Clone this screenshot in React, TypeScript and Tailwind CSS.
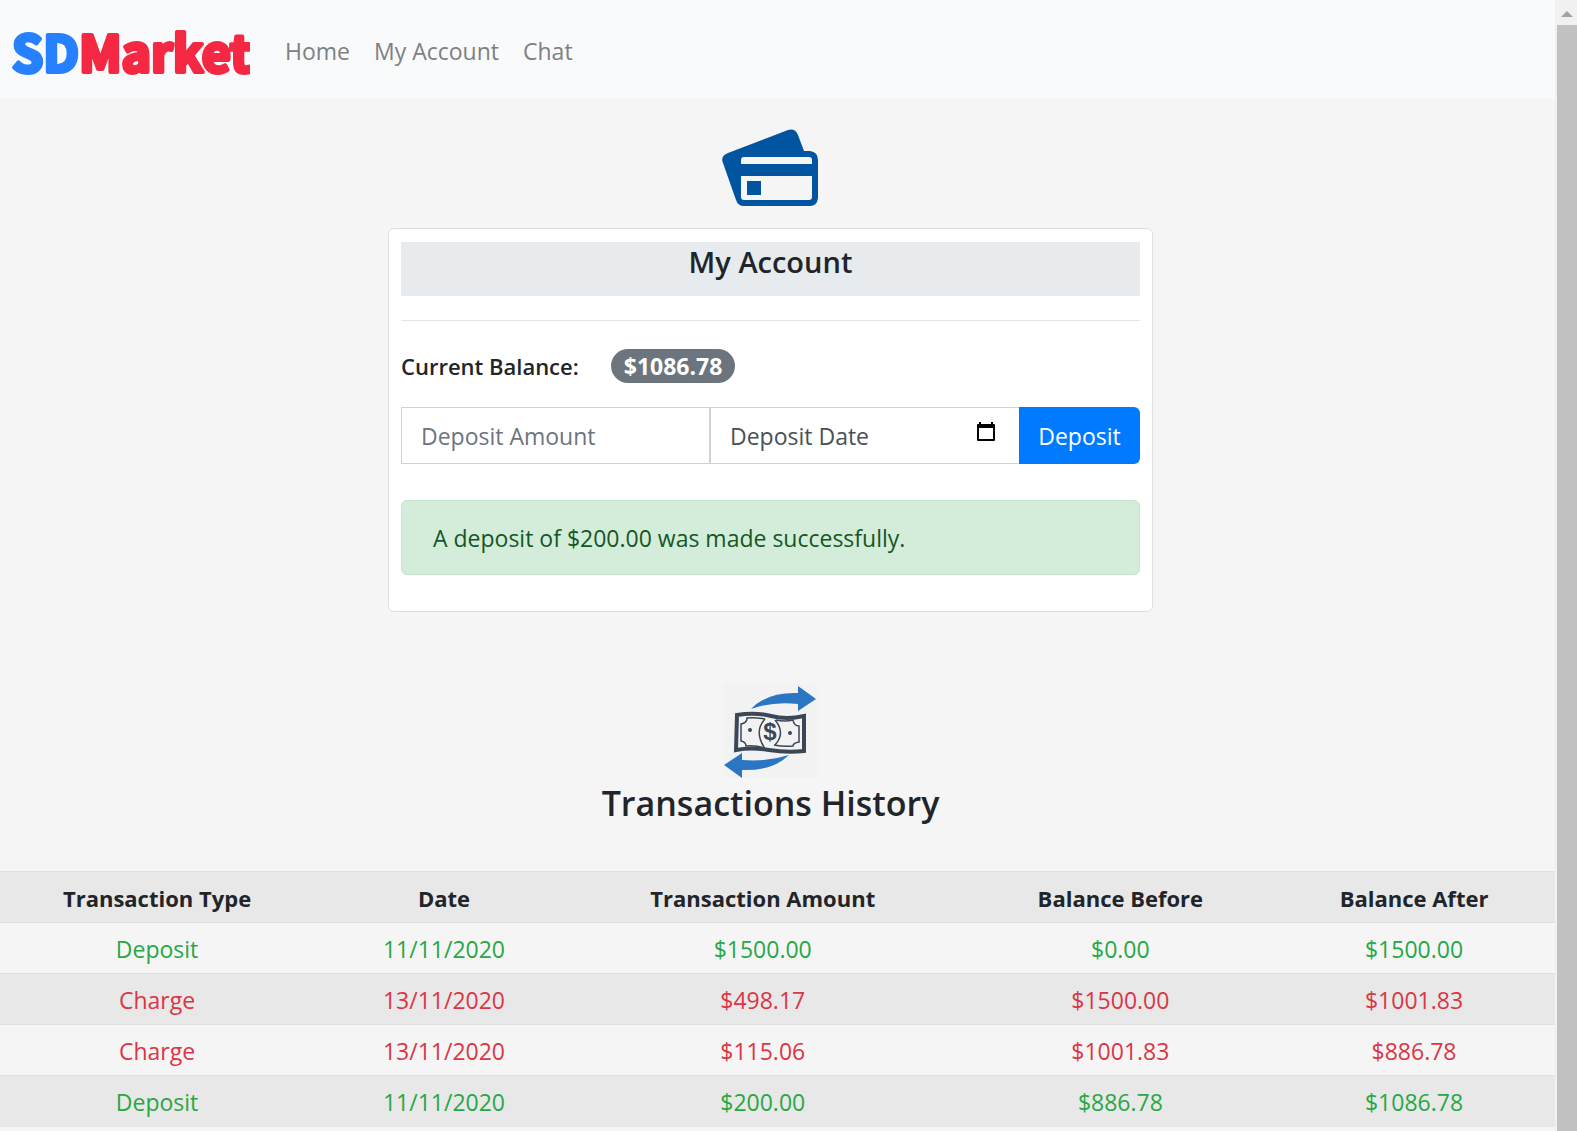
import React from "react";

type Row = {
  type: "Deposit" | "Charge";
  date: string;
  amount: string;
  before: string;
  after: string;
};

const rows: Row[] = [
  { type: "Deposit", date: "11/11/2020", amount: "$1500.00", before: "$0.00", after: "$1500.00" },
  { type: "Charge", date: "13/11/2020", amount: "$498.17", before: "$1500.00", after: "$1001.83" },
  { type: "Charge", date: "13/11/2020", amount: "$115.06", before: "$1001.83", after: "$886.78" },
  { type: "Deposit", date: "11/11/2020", amount: "$200.00", before: "$886.78", after: "$1086.78" },
];

function Logo() {
  return (
    <a href="#" aria-label="SDMarket" className="ml-2">
      <svg
        width="242"
        height="80"
        viewBox="0 0 242 80"
        className="font-['Noto_Sans_CJK_SC',sans-serif] text-[50px] font-bold"
        strokeWidth="4"
        strokeLinejoin="round"
      >
        <text x="4" y="62">
          <tspan fill="#2680ff" stroke="#2680ff">SD</tspan>
          <tspan fill="#f52843" stroke="#f52843">Market</tspan>
        </text>
      </svg>
    </a>
  );
}

function NavBar() {
  return (
    <header className="flex h-[99px] items-center bg-[#f8fafc]">
      <Logo />
      <nav className="ml-[35px] flex gap-6 pt-0.5 text-[#7f8081]">
        <a href="#">Home</a>
        <a href="#">My Account</a>
        <a href="#">Chat</a>
      </nav>
    </header>
  );
}

function CardsIcon() {
  return (
    <svg width="97" height="78" viewBox="0 0 97 78" aria-hidden="true">
      <path
        fill="#0054a0"
        fillRule="evenodd"
        d="M6 24 66 1Q73-1 76 6L82 22H88Q96 23 96 31V69Q95 77 88 77H22Q16 77 14 71L1 34Q-2 27 6 24ZM22 28Q19 28 19 31V35H90V31Q90 28 87 28ZM19 47V68Q19 71 22 71H87Q90 71 90 68V47Z"
      />
      <rect x="25" y="52" width="14" height="14" fill="#0054a0" />
    </svg>
  );
}

function TransferIcon() {
  return (
    <svg width="95" height="94" viewBox="0 0 95 94" aria-hidden="true">
      <defs>
        <pattern id="stripes" width="4" height="4" patternUnits="userSpaceOnUse">
          <path d="M-1 1 1-1M0 4 4 0M3 5 5 3" stroke="#eeeeee" strokeWidth="1" />
        </pattern>
      </defs>
      <rect width="94" height="94" fill="#f4f4f4" />
      <rect width="94" height="94" fill="url(#stripes)" />
      <path d="M28 25Q44 8 75 9V2L93 15 75 27V20Q50 17 28 25Z" fill="#2b76c2" />
      <path d="M66 71Q50 87 19 86V94L1 81 19 69V76Q44 78 66 71Z" fill="#2b76c2" />
      <g fill="none" stroke="#3b4656">
        <path d="M14 31Q32 28 48 32T81 32V67Q64 69 46 66T13 66Z" strokeWidth="4" />
        <path d="M42 35Q31 33 24 34 24 39 18 40V57Q23 58 23 62 32 61 42 64M53 36Q62 38 70 36 71 42 76 42V58Q70 59 70 62 61 63 51 61" strokeWidth="1.5" />
        <path d="M42 35Q31 47 41 63M52 36Q63 49 52 61" strokeWidth="1.5" />
      </g>
      <circle cx="27" cy="46" r="2" fill="#3b4656" />
      <circle cx="67" cy="49" r="2" fill="#3b4656" />
      <text x="47" y="56" textAnchor="middle" className="font-['Liberation_Sans',sans-serif] text-[24px] font-bold" fill="#3b4656">
        $
      </text>
    </svg>
  );
}

function CalendarIcon() {
  return (
    <svg width="20" height="22" viewBox="0 0 20 22" aria-hidden="true">
      <path d="M3 1h2v2h10V1h2v2h1q1 0 1 1v15q0 1-1 1H2q-1 0-1-1V4q0-1 1-1h1zM3 7v11h14V7z" fill="#000" fillRule="evenodd" />
    </svg>
  );
}

function AccountCard() {
  return (
    <section className="mx-auto mt-[21px] w-[765px] max-w-full rounded-md border border-[#dfdfdf] bg-white px-3 pt-[13px] pb-9">
      <h1 className="h-[54px] bg-[#e7ebee] text-center text-[29px] leading-10 font-semibold">My Account</h1>
      <hr className="mt-6 border-[#e3e4e5]" />
      <div className="mt-7 flex items-center gap-8 leading-[34px]">
        <span className="text-[22px] font-semibold">Current Balance:</span>
        <span className="rounded-full bg-[#6c757d] px-[13px] font-bold text-white">$1086.78</span>
      </div>
      <form className="mt-6 flex h-[57px]" onSubmit={(e) => e.preventDefault()}>
        <div className="flex min-w-0 flex-1">
          <input
            aria-label="Deposit Amount"
            placeholder="Deposit Amount"
            className="w-full min-w-0 border border-[#ced4da] px-[19px] placeholder:text-[#6c757d] placeholder:opacity-100"
          />
        </div>
        <div className="relative flex min-w-0 flex-1">
          <input
            aria-label="Deposit Date"
            placeholder="Deposit Date"
            className="w-full min-w-0 border border-r-0 border-[#ced4da] px-[19px] placeholder:text-[#495057] placeholder:opacity-100"
          />
          <button type="button" aria-label="Pick a date" className="absolute top-[14px] right-[23px]">
            <CalendarIcon />
          </button>
        </div>
        <button type="submit" className="w-[121px] rounded-r-md bg-[#007bff] text-white">
          Deposit
        </button>
      </form>
      <p role="status" className="mt-9 rounded-md border border-[#c3e6cb] bg-[#d4edda] px-[31px] pt-[19px] pb-[18px] leading-9 text-[#155724]">
        A deposit of $200.00 was made successfully.
      </p>
    </section>
  );
}

function TransactionsTable() {
  return (
    <table className="w-full table-fixed text-center">
      <colgroup>
        <col className="w-[20.2%]" />
        <col className="w-[16.7%]" />
        <col className="w-[24.3%]" />
        <col className="w-[21.7%]" />
        <col className="w-[17.1%]" />
      </colgroup>
      <thead>
        <tr className="h-[51px] border-t border-[#dee2e6] bg-[#e8e8e8] text-[22px]">
          <th scope="col" className="pt-px">Transaction Type</th>
          <th scope="col" className="pt-px">Date</th>
          <th scope="col" className="pt-px">Transaction Amount</th>
          <th scope="col" className="pt-px">Balance Before</th>
          <th scope="col" className="pt-px pr-4">Balance After</th>
        </tr>
      </thead>
      <tbody>
        {rows.map((r, i) => (
          <tr
            key={i}
            className={
              "h-[51px] border-t border-[#dee2e6] " +
              (i % 2 ? "bg-[#e8e8e8] " : "") +
              (r.type === "Deposit" ? "text-[#28a745]" : "text-[#dc3545]")
            }
          >
            <td className="pt-px">{r.type}</td>
            <td className="pt-px">{r.date}</td>
            <td className="pt-px">{r.amount}</td>
            <td className="pt-px">{r.before}</td>
            <td className="pt-px pr-4">{r.after}</td>
          </tr>
        ))}
      </tbody>
    </table>
  );
}

function ScrollTrack() {
  return (
    <div aria-hidden="true" className="flex w-[22px] shrink-0 flex-col bg-[#f1f1f1] pl-[2px]">
      <div className="flex h-[25px] items-center justify-center pt-[2px]">
        <svg width="12" height="6" viewBox="0 0 12 6">
          <path d="M6 0 12 6H0Z" fill="#a3a3a3" />
        </svg>
      </div>
      <div className="flex-1 bg-[#c1c1c1]" />
    </div>
  );
}

export default function App() {
  return (
    <div className="flex min-h-screen bg-[#f5f5f5] font-['Open_Sans','Noto_Sans',sans-serif] text-[23px] leading-9 text-[#212529]">
      <div className="min-w-0 flex-1">
        <NavBar />
        <main>
          <div className="pr-[14px]">
            <div className="flex justify-center pt-[30px]">
              <CardsIcon />
            </div>
            <AccountCard />
            <div className="mt-[72px] flex flex-col items-center">
              <TransferIcon />
              <h2 className="text-[34px] leading-[50px] font-semibold">Transactions History</h2>
            </div>
          </div>
          <div className="mt-[43px]">
            <TransactionsTable />
          </div>
        </main>
      </div>
      <ScrollTrack />
    </div>
  );
}
